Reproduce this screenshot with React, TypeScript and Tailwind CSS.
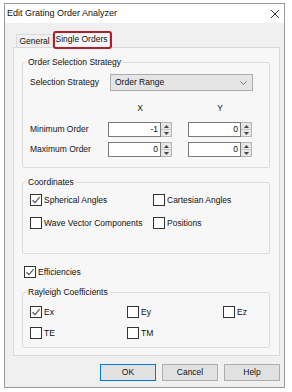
import type { ReactNode } from 'react';

const font = { fontFamily: '"Liberation Sans", Arial, sans-serif' };

const Check = ({ checked }: { checked?: boolean }) => (
  <span className="w-[12px] h-[12px] border border-[#333333] bg-white flex items-center justify-center shrink-0">
    {checked && (
      <svg width="10" height="10" viewBox="0 0 10 10">
        <path d="M1.5 5.2 L4 7.6 L8.6 2.2" fill="none" stroke="#555555" strokeWidth="1.2" />
      </svg>
    )}
  </span>
);

const CheckItem = ({ label, checked, className }: { label: string; checked?: boolean; className?: string }) => (
  <div className={`flex items-center gap-[2px] h-[12px] ${className ?? ''}`}>
    <Check checked={checked} />
    <span className="leading-[12px]">{label}</span>
  </div>
);

const Group = ({ title, className, children }: { title: string; className: string; children: ReactNode }) => (
  <div className={`relative border border-[#dcdcdc] rounded-[2px] ${className}`}>
    <span className="absolute left-[3px] -top-[6px] px-[2px] bg-[#f7f7f7] leading-[11px]">{title}</span>
    {children}
  </div>
);

const Spin = ({ value }: { value: string }) => (
  <div className="flex h-[15px] w-[64px]">
    <div className="flex-1 bg-white border border-[#7a7a7a] flex items-center justify-end pr-[2px] leading-[13px]">{value}</div>
    <div className="w-[11px] flex flex-col border-y border-r border-[#b5b5b5] bg-[#e6e6e6]">
      <div className="flex-1 flex items-center justify-center border-b border-[#c8c8c8]">
        <svg width="5" height="3" viewBox="0 0 5 3"><path d="M0 3 L2.5 0 L5 3 Z" fill="#444" /></svg>
      </div>
      <div className="flex-1 flex items-center justify-center">
        <svg width="5" height="3" viewBox="0 0 5 3"><path d="M0 0 L2.5 3 L5 0 Z" fill="#444" /></svg>
      </div>
    </div>
  </div>
);

const Button = ({ label, primary }: { label: string; primary?: boolean }) => (
  <div
    className={`w-[56px] h-[17px] flex items-center justify-center bg-[#e1e1e1] border ${
      primary ? 'border-[#0078d7]' : 'border-[#adadad]'
    }`}
  >
    {label}
  </div>
);

export default function App() {
  return (
    <div className="w-[292px] h-[392px] bg-white pl-[4px] pt-[3px] text-[8.5px] text-[#111111]" style={font}>
      <div className="w-[281px] h-[385px] border border-[#9a9a9a] bg-[#f0f0f0] flex flex-col">
        <div className="h-[19px] bg-white flex items-center justify-between pl-[2px] pr-[4px]">
          <span className="text-[9px]">Edit Grating Order Analyzer</span>
          <svg width="10" height="10" viewBox="0 0 10 10">
            <path d="M1 1 L9 9 M9 1 L1 9" stroke="#333" strokeWidth="1" />
          </svg>
        </div>

        <div className="pl-[8px] pt-[8px]">
          <div className="flex items-end h-[16px]">
            <div className="ml-[3px] w-[37px] h-[13px] border border-b-0 border-[#d9d9d9] bg-[#f0f0f0] flex items-center justify-center">
              General
            </div>
            <div className="relative w-[57px] h-[16px] bg-[#f7f7f7] border border-b-0 border-[#d9d9d9] flex items-center justify-center">
              Single Orders
              <div className="absolute -left-[1px] -top-[1px] w-[59px] h-[18px] border-2 border-[#b1202a] rounded-[3px]" />
            </div>
          </div>

          <div className="w-[267px] h-[309px] border border-[#d9d9d9] bg-[#f7f7f7] pl-[8px] pt-[14px]">
            <Group title="Order Selection Strategy" className="w-[248px] h-[106px] pl-[7px] pt-[11px]">
              <div className="flex items-center h-[17px]">
                <span className="w-[80px]">Selection Strategy</span>
                <div className="w-[143px] h-[17px] bg-[#e5e5e5] border border-[#adadad] flex items-center justify-between pl-[4px] pr-[5px]">
                  <span>Order Range</span>
                  <svg width="7" height="4" viewBox="0 0 7 4"><path d="M0.5 0.5 L3.5 3.5 L6.5 0.5" fill="none" stroke="#666" strokeWidth="0.9" /></svg>
                </div>
              </div>
              <div className="flex h-[11px] mt-[12px] leading-[11px]">
                <span className="w-[78px]" />
                <span className="w-[64px] text-center">X</span>
                <span className="w-[16px]" />
                <span className="w-[64px] text-center">Y</span>
              </div>
              <div className="flex items-center mt-[8px]">
                <span className="w-[78px]">Minimum Order</span>
                <Spin value="-1" />
                <span className="w-[16px]" />
                <Spin value="0" />
              </div>
              <div className="flex items-center mt-[5px]">
                <span className="w-[78px]">Maximum Order</span>
                <Spin value="0" />
                <span className="w-[16px]" />
                <Spin value="0" />
              </div>
            </Group>

            <Group title="Coordinates" className="w-[248px] h-[72px] mt-[14px] pl-[7px] pt-[11px]">
              <div className="flex">
                <CheckItem label="Spherical Angles" checked className="w-[123px]" />
                <CheckItem label="Cartesian Angles" />
              </div>
              <div className="flex mt-[11px]">
                <CheckItem label="Wave Vector Components" className="w-[123px]" />
                <CheckItem label="Positions" />
              </div>
            </Group>

            <CheckItem label="Efficiencies" checked className="mt-[12px] ml-[2px]" />

            <Group title="Rayleigh Coefficients" className="w-[248px] h-[56px] mt-[14px] pl-[7px] pt-[13px]">
              <div className="flex">
                <CheckItem label="Ex" checked className="w-[97px]" />
                <CheckItem label="Ey" className="w-[96px]" />
                <CheckItem label="Ez" />
              </div>
              <div className="flex mt-[9px]">
                <CheckItem label="TE" className="w-[97px]" />
                <CheckItem label="TM" />
              </div>
            </Group>
          </div>
        </div>

        <div className="flex justify-end gap-[6px] pr-[4px] mt-[8px]">
          <Button label="OK" primary />
          <Button label="Cancel" />
          <Button label="Help" />
        </div>
      </div>
    </div>
  );
}
